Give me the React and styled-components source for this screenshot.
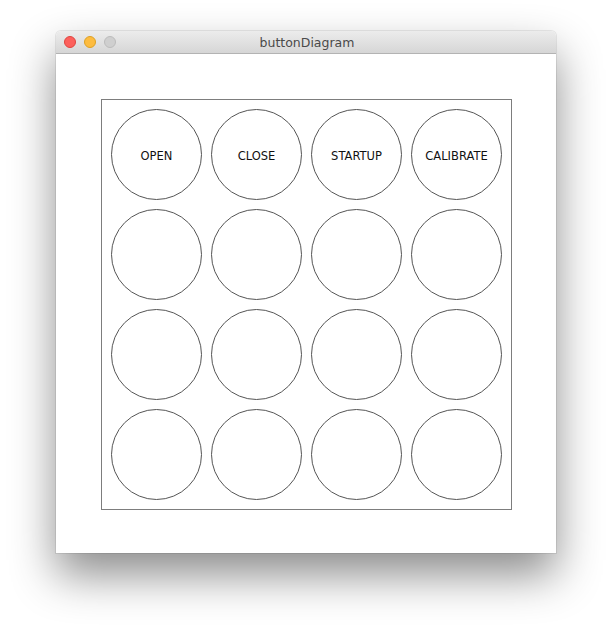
import React from 'react';
import styled, { createGlobalStyle } from 'styled-components';

const GlobalStyle = createGlobalStyle`
	html, body {
		margin: 0;
		padding: 0;
		background: #ffffff;
	}
	body {
		font-family: "DejaVu Sans", "Liberation Sans", sans-serif;
	}
`;

const Page = styled.div`
	width: 612px;
	height: 634px;
	box-sizing: border-box;
	padding: 31px 56px 0 56px;
	background: #ffffff;
	overflow: hidden;
`;

const Window = styled.div`
	width: 500px;
	height: 522px;
	display: flex;
	flex-direction: column;
	background: #ffffff;
	border-radius: 5px 5px 0 0;
	box-shadow: 0 22px 45px rgba(0, 0, 0, 0.45), 0 0 0 1px rgba(0, 0, 0, 0.08);
`;

const TitleBar = styled.div`
	position: relative;
	height: 22px;
	flex: none;
	display: flex;
	align-items: center;
	justify-content: center;
	background: linear-gradient(#ececec, #d6d6d6);
	border-bottom: 1px solid #b3b3b3;
	border-radius: 5px 5px 0 0;
`;

const Lights = styled.div`
	position: absolute;
	left: 8px;
	top: 5px;
	display: flex;
	gap: 8px;
`;

const Light = styled.span`
	width: 12px;
	height: 12px;
	box-sizing: border-box;
	border-radius: 50%;
	background: ${p => p.color};
	border: 1px solid ${p => p.edge};
`;

const Title = styled.div`
	font-size: 12.5px;
	color: #4a4a4a;
	padding-left: 2px;
`;

const Content = styled.div`
	flex: 1;
	padding: 45px;
`;

const Board = styled.div`
	width: 411px;
	height: 411px;
	box-sizing: border-box;
	border: 1px solid #7d7d7d;
	padding: 9px;
	display: grid;
	grid-template-columns: repeat(4, 91px);
	grid-template-rows: repeat(4, 91px);
	gap: 9px;
`;

const Circle = styled.div`
	width: 91px;
	height: 91px;
	box-sizing: border-box;
	border: 1px solid #555555;
	border-radius: 50%;
	display: flex;
	align-items: center;
	justify-content: center;
	padding-top: 3px;
	font-size: 11.5px;
	color: #111111;
`;

const labels = ['OPEN', 'CLOSE', 'STARTUP', 'CALIBRATE'];

const App = () => {
	const cells = Array.from({ length: 16 }, (_, i) => labels[i] || '');
	return (
		<>
			<GlobalStyle />
			<Page>
				<Window>
					<TitleBar>
						<Lights>
							<Light color="#fc605c" edge="#e0443e" />
							<Light color="#fdbc40" edge="#dea123" />
							<Light color="#cfcfcf" edge="#bcbcbc" />
						</Lights>
						<Title>buttonDiagram</Title>
					</TitleBar>
					<Content>
						<Board>
							{cells.map((label, i) => (
								<Circle key={i}>{label}</Circle>
							))}
						</Board>
					</Content>
				</Window>
			</Page>
		</>
	);
};

export default App;
